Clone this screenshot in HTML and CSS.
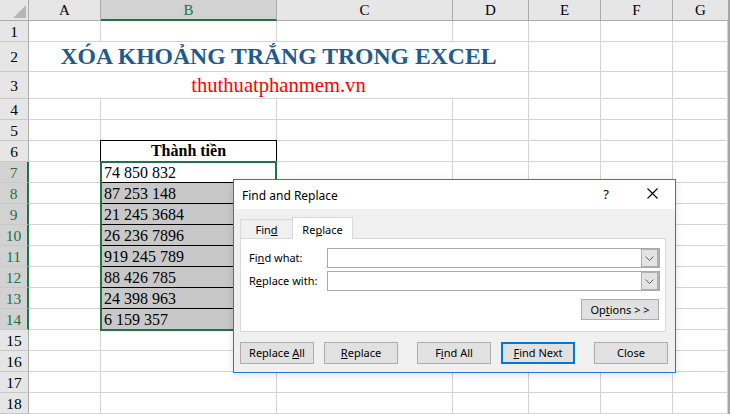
FILE: index.html
```
<!DOCTYPE html>
<html lang="vi">
<head>
<meta charset="utf-8">
<title>Find and Replace</title>
<link rel="stylesheet" href="styles.css">
</head>
<body>
<div class="sheet">
  <div class="corner"><svg width="29" height="21" viewBox="0 0 29 21"><polygon points="26,5 26,18 13,18" fill="#b5b5b5"/></svg></div>
  <div class="ch">A</div><div class="ch sel">B</div><div class="ch">C</div><div class="ch">D</div><div class="ch">E</div><div class="ch">F</div><div class="ch last">G</div>

  <div class="rh">1</div><div class="c"></div><div class="c"></div><div class="c"></div><div class="c"></div><div class="c"></div><div class="c"></div><div class="c"></div>
  <div class="rh">2</div><div class="c merged title">XÓA KHOẢNG TRẮNG TRONG EXCEL</div><div class="c"></div><div class="c"></div><div class="c"></div>
  <div class="rh">3</div><div class="c merged site">thuthuatphanmem.vn</div><div class="c"></div><div class="c"></div><div class="c"></div>
  <div class="rh">4</div><div class="c"></div><div class="c"></div><div class="c"></div><div class="c"></div><div class="c"></div><div class="c"></div><div class="c"></div>
  <div class="rh">5</div><div class="c"></div><div class="c"></div><div class="c"></div><div class="c"></div><div class="c"></div><div class="c"></div><div class="c"></div>
  <div class="rh">6</div><div class="c"></div><div class="c head">Thành tiền</div><div class="c"></div><div class="c"></div><div class="c"></div><div class="c"></div><div class="c"></div>
  <div class="rh sel">7</div><div class="c"></div><div class="c num">74 850 832</div><div class="c"></div><div class="c"></div><div class="c"></div><div class="c"></div><div class="c"></div>
  <div class="rh sel">8</div><div class="c"></div><div class="c num fill">87 253 148</div><div class="c"></div><div class="c"></div><div class="c"></div><div class="c"></div><div class="c"></div>
  <div class="rh sel">9</div><div class="c"></div><div class="c num fill">21 245 3684</div><div class="c"></div><div class="c"></div><div class="c"></div><div class="c"></div><div class="c"></div>
  <div class="rh sel">10</div><div class="c"></div><div class="c num fill">26 236 7896</div><div class="c"></div><div class="c"></div><div class="c"></div><div class="c"></div><div class="c"></div>
  <div class="rh sel">11</div><div class="c"></div><div class="c num fill">919 245 789</div><div class="c"></div><div class="c"></div><div class="c"></div><div class="c"></div><div class="c"></div>
  <div class="rh sel">12</div><div class="c"></div><div class="c num fill">88 426 785</div><div class="c"></div><div class="c"></div><div class="c"></div><div class="c"></div><div class="c"></div>
  <div class="rh sel">13</div><div class="c"></div><div class="c num fill">24 398 963</div><div class="c"></div><div class="c"></div><div class="c"></div><div class="c"></div><div class="c"></div>
  <div class="rh sel">14</div><div class="c"></div><div class="c num fill">6 159 357</div><div class="c"></div><div class="c"></div><div class="c"></div><div class="c"></div><div class="c"></div>
  <div class="rh">15</div><div class="c"></div><div class="c"></div><div class="c"></div><div class="c"></div><div class="c"></div><div class="c"></div><div class="c"></div>
  <div class="rh">16</div><div class="c"></div><div class="c"></div><div class="c"></div><div class="c"></div><div class="c"></div><div class="c"></div><div class="c"></div>
  <div class="rh">17</div><div class="c"></div><div class="c"></div><div class="c"></div><div class="c"></div><div class="c"></div><div class="c"></div><div class="c"></div>
  <div class="rh">18</div><div class="c"></div><div class="c"></div><div class="c"></div><div class="c"></div><div class="c"></div><div class="c"></div><div class="c"></div>

  <div class="selection"></div>
</div>

<div class="dialog">
  <div class="dlg-title">
    <span class="dlg-name">Find and Replace</span>
    <span class="cap help">?</span>
    <span class="cap close"><svg width="11" height="11" viewBox="0 0 11 11"><path d="M0.5 0.5 L10.5 10.5 M10.5 0.5 L0.5 10.5" stroke="#000" stroke-width="1.1" fill="none"/></svg></span>
  </div>
  <div class="dlg-body">
    <div class="tabs">
      <div class="tab tab-find">Fin<u>d</u></div>
      <div class="tab tab-replace active">Re<u>p</u>lace</div>
    </div>
    <div class="panel">
      <div class="field">
        <span class="label">Fi<u>n</u>d what:</span>
        <div class="combo"><span class="drop"><svg width="9" height="5" viewBox="0 0 9 5"><path d="M0.5 0.5 L4.5 4.5 L8.5 0.5" stroke="#606060" fill="none"/></svg></span></div>
      </div>
      <div class="field">
        <span class="label">R<u>e</u>place with:</span>
        <div class="combo"><span class="drop"><svg width="9" height="5" viewBox="0 0 9 5"><path d="M0.5 0.5 L4.5 4.5 L8.5 0.5" stroke="#606060" fill="none"/></svg></span></div>
      </div>
      <div class="options-row">
        <button class="btn options">Op<u>t</u>ions &gt; &gt;</button>
      </div>
    </div>
    <div class="footer">
      <button class="btn">Replace <u>A</u>ll</button>
      <button class="btn"><u>R</u>eplace</button>
      <button class="btn wide-gap">F<u>i</u>nd All</button>
      <button class="btn default"><u>F</u>ind Next</button>
      <button class="btn wide-gap">Close</button>
    </div>
  </div>
</div>
</body>
</html>
```
FILE: styles.css
```
html, body {
  margin: 0;
  padding: 0;
  background: #fff;
}
body {
  width: 730px;
  height: 414px;
  overflow: hidden;
  position: relative;
}
.sheet {
  position: relative;
  display: grid;
  grid-template-columns: 29px 72px 176px 176px 76px 72px 72px 55px;
  grid-template-rows: 21px 21px 30px 27px repeat(15, 21px);
  width: 730px;
  height: 414px;
  box-sizing: border-box;
  border-right: 2px solid #a6a6a6;
  font-family: "Liberation Serif", "Times New Roman", serif;
  color: #000;
}
.corner {
  background: #e6e6e6;
  border-right: 1px solid #ababab;
  border-bottom: 1px solid #ababab;
  box-sizing: border-box;
}
.corner svg { display: block; }
.ch {
  background: #e6e6e6;
  border-right: 1px solid #ababab;
  border-bottom: 1px solid #ababab;
  box-sizing: border-box;
  text-align: center;
  font-size: 15px;
  line-height: 21px;
}
.ch.last { border-right: none; }
.ch.sel {
  background: #d2d2d2;
  color: #217346;
  border-bottom: 2px solid #217346;
}
.rh {
  background: #e6e6e6;
  border-right: 1px solid #ababab;
  border-bottom: 1px solid #c8c8c8;
  box-sizing: border-box;
  text-align: center;
  font-size: 15.5px;
  display: flex;
  align-items: center;
  justify-content: center;
  padding-top: 1px;
}
.rh.sel {
  background: #d2d2d2;
  color: #217346;
  border-right: 2px solid #217346;
}
.c {
  border-right: 1px solid #d4d4d4;
  border-bottom: 1px solid #d4d4d4;
  box-sizing: border-box;
  min-width: 0;
}
.merged {
  grid-column: span 4;
  display: flex;
  justify-content: center;
  white-space: nowrap;
}
.title {
  align-items: flex-end;
  font-weight: bold;
  font-size: 23.7px;
  color: #215a8c;
  line-height: 27px;
  padding-bottom: 1px;
}
.site {
  align-items: flex-end;
  font-size: 20.6px;
  color: #ff0000;
  line-height: 24px;
  padding-bottom: 1px;
}
.head {
  border: 1px solid #000;
  margin: -1px 0 0 -1px;
  font-weight: bold;
  font-size: 16px;
  text-align: center;
  line-height: 19px;
}
.num {
  font-size: 16px;
  line-height: 20px;
  padding: 1px 0 0 3px;
  border-bottom: 1px solid #000;
  white-space: nowrap;
}
.num.fill {
  background: #c8c8c8;
}
.selection {
  position: absolute;
  grid-column: 3 / 4;
  grid-row: 8 / 16;
  top: -1px;
  left: -1px;
  right: 0;
  bottom: -1px;
  border: 2px solid #217346;
  pointer-events: none;
}

/* Dialog */
.dialog {
  position: absolute;
  left: 233px;
  top: 179px;
  width: 443px;
  height: 194px;
  box-sizing: border-box;
  border: 1px solid #1a7fd4;
  background: #f0f0f0;
  font-family: "Noto Sans", "Open Sans", sans-serif;
  font-size: 11px;
  color: #000;
  box-shadow: 0 2px 8px rgba(0, 0, 0, 0.12);
}
.dlg-title {
  height: 29px;
  background: #fff;
  display: flex;
  align-items: center;
  padding-left: 8px;
  font-size: 12px;
}
.dlg-name {
  flex: 1;
  padding-top: 1px;
}
.cap {
  width: 46px;
  height: 29px;
  display: flex;
  align-items: center;
  justify-content: center;
}
.help {
  font-size: 13px;
  padding-bottom: 2px;
  box-sizing: border-box;
}
.close svg { display: block; margin-bottom: 2px; }
.dlg-body {
  padding: 8px 9px 0 6px;
}
.tabs {
  display: flex;
  align-items: flex-end;
  height: 21px;
}
.tab {
  box-sizing: border-box;
  height: 19px;
  border: 1px solid #d9d9d9;
  border-bottom: none;
  display: flex;
  align-items: center;
  justify-content: center;
  padding-top: 1px;
  background: #f0f0f0;
}
.tab-find {
  width: 52px;
  border-right: none;
}
.tab-replace {
  width: 61px;
}
.tab.active {
  height: 22px;
  background: #fff;
  margin-bottom: -1px;
  position: relative;
  z-index: 1;
}
.panel {
  width: 426px;
  height: 94px;
  box-sizing: border-box;
  border: 1px solid #d9d9d9;
  background: #fff;
  padding: 9px 5px 0 8px;
}
.field {
  display: flex;
  align-items: center;
  height: 20px;
  margin-bottom: 3px;
}
.label {
  width: 78px;
  flex: none;
  padding-bottom: 1px;
}
.combo {
  flex: 1;
  height: 20px;
  box-sizing: border-box;
  border: 1px solid #a9a9a9;
  display: flex;
  justify-content: flex-end;
}
.drop {
  width: 18px;
  box-sizing: border-box;
  border: 1px solid #b0b0b0;
  border-right-width: 2px;
  background: #e3e3e3;
  display: flex;
  align-items: center;
  justify-content: center;
}
.drop svg { display: block; }
.options-row {
  display: flex;
  justify-content: flex-end;
  margin-top: 8px;
  padding-right: 1px;
}
.btn {
  width: 74px;
  height: 22px;
  box-sizing: border-box;
  background: #e1e1e1;
  border: 1px solid #adadad;
  font-family: "Noto Sans", "Open Sans", sans-serif;
  font-size: 11px;
  color: #000;
  padding: 0 0 1px;
  margin: 0;
  flex: none;
}
.btn.options {
  width: 78px;
  height: 21px;
}
.btn.default {
  border: 2px solid #0078d7;
}
.footer {
  display: flex;
  gap: 10px;
  margin-top: 10px;
}
.wide-gap {
  margin-left: 9px;
}
```
